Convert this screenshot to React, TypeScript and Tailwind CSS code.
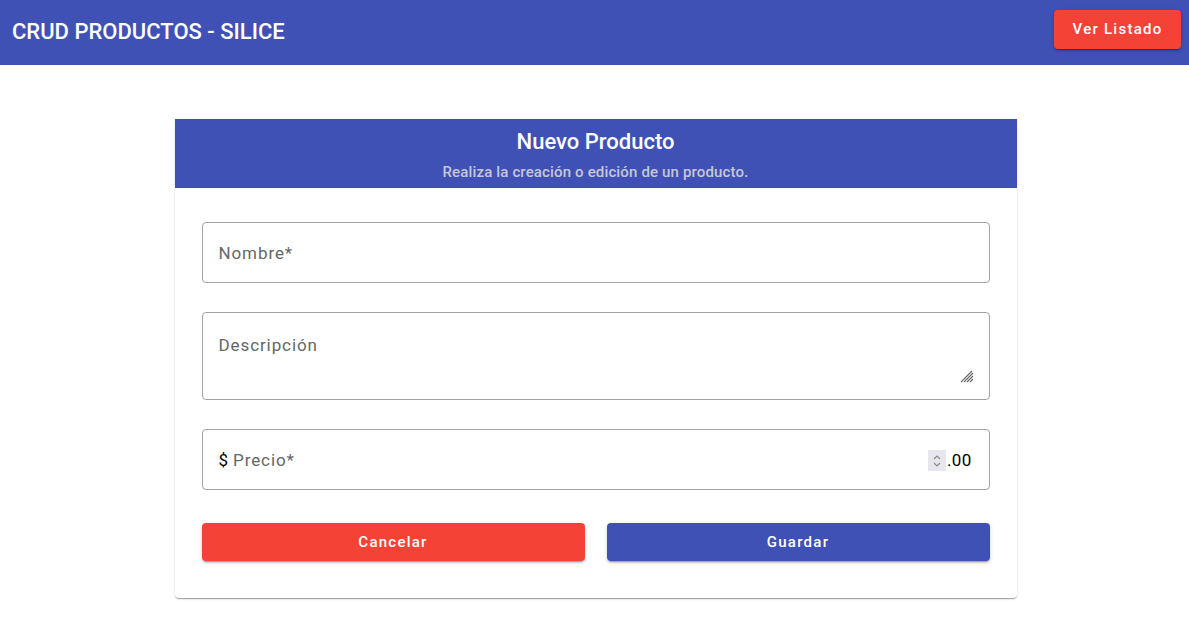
import React from "react";

export default function App() {
  return (
    <div className="min-h-[622px] bg-white" style={{ fontFamily: "Roboto, 'Liberation Sans', sans-serif" }}>
      <header className="h-[65px] bg-[#3f51b5] flex items-center justify-between pl-3 pr-2">
        <h1 className="text-white text-[22px] font-medium leading-none -mt-[2px]">CRUD PRODUCTOS - SILICE</h1>
        <button className="self-start mt-[10px] h-[39px] w-[127px] rounded-[4px] bg-[#f44336] text-white text-[15px] font-medium tracking-[1.25px] shadow-[0_3px_1px_-2px_rgba(0,0,0,0.2),0_2px_2px_0_rgba(0,0,0,0.14),0_1px_5px_0_rgba(0,0,0,0.12)]">
          Ver Listado
        </button>
      </header>

      <div className="pt-[54px] flex justify-center pl-[2px]">
        <div className="w-[842px] rounded-b-[4px] overflow-hidden bg-white shadow-[0_2px_1px_-1px_rgba(0,0,0,0.2),0_1px_1px_0_rgba(0,0,0,0.14),0_1px_3px_0_rgba(0,0,0,0.12)]">
          <div className="h-[69px] bg-[#3f51b5] flex flex-col items-center pt-[8px]">
            <div className="text-white text-[22px] font-medium leading-[29px]">Nuevo Producto</div>
            <div className="mt-[4px] text-[#c6c7d3] text-[15px] font-medium leading-[24px] tracking-[0.15px]">
              Realiza la creación o edición de un producto.
            </div>
          </div>

          <div className="px-[27px] pt-[34px] pb-[37px] flex flex-col">
            <div className="h-[61px] rounded-[4px] border border-[#a3a3a3] flex items-center px-4 pt-[2px]">
              <span className="text-[17px] text-[#666666] tracking-[0.9px]">Nombre*</span>
            </div>

            <div className="mt-[29px] h-[88px] rounded-[4px] border border-[#a3a3a3] relative px-4 pt-[20px]">
              <span className="text-[17px] leading-[24px] text-[#666666] tracking-[0.9px]">Descripción</span>
              <svg className="absolute right-[15px] bottom-[16px]" width="14" height="14" viewBox="0 0 14 14">
                <line x1="1" y1="13" x2="12" y2="2" stroke="#666" strokeWidth="1.1" />
                <line x1="4" y1="13" x2="13" y2="4" stroke="#666" strokeWidth="1.1" />
                <line x1="7" y1="13" x2="13" y2="7" stroke="#666" strokeWidth="1.1" />
                <line x1="10" y1="13" x2="13" y2="10" stroke="#666" strokeWidth="1.1" />
              </svg>
            </div>

            <div className="mt-[29px] h-[61px] rounded-[4px] border border-[#a3a3a3] flex items-center pl-4 pr-[17px] pt-[2px]">
              <span className="text-[17px] text-black">$</span>
              <span className="ml-[5px] text-[17px] text-[#666666] tracking-[0.9px]">Precio*</span>
              <div className="ml-auto flex items-center">
                <div className="w-[18px] h-[21px] bg-[#e6e6ec] flex items-center justify-center">
                  <svg width="10" height="16" viewBox="0 0 10 16" fill="none" stroke="#8a8a8a" strokeWidth="1.2">
                    <polyline points="2,6 5,3 8,6" />
                    <polyline points="2,10 5,13 8,10" />
                  </svg>
                </div>
                <span className="ml-[1px] text-[17px] text-black tracking-[0.3px]">.00</span>
              </div>
            </div>

            <div className="mt-[33px] grid grid-cols-2 gap-[22px]">
              <button className="h-[38px] rounded-[4px] bg-[#f44336] text-white text-[15px] font-medium tracking-[1.25px] shadow-[0_3px_1px_-2px_rgba(0,0,0,0.2),0_2px_2px_0_rgba(0,0,0,0.14),0_1px_5px_0_rgba(0,0,0,0.12)]">
                Cancelar
              </button>
              <button className="h-[38px] rounded-[4px] bg-[#3f51b5] text-white text-[15px] font-medium tracking-[1.25px] shadow-[0_3px_1px_-2px_rgba(0,0,0,0.2),0_2px_2px_0_rgba(0,0,0,0.14),0_1px_5px_0_rgba(0,0,0,0.12)]">
                Guardar
              </button>
            </div>
          </div>
        </div>
      </div>
    </div>
  );
}
